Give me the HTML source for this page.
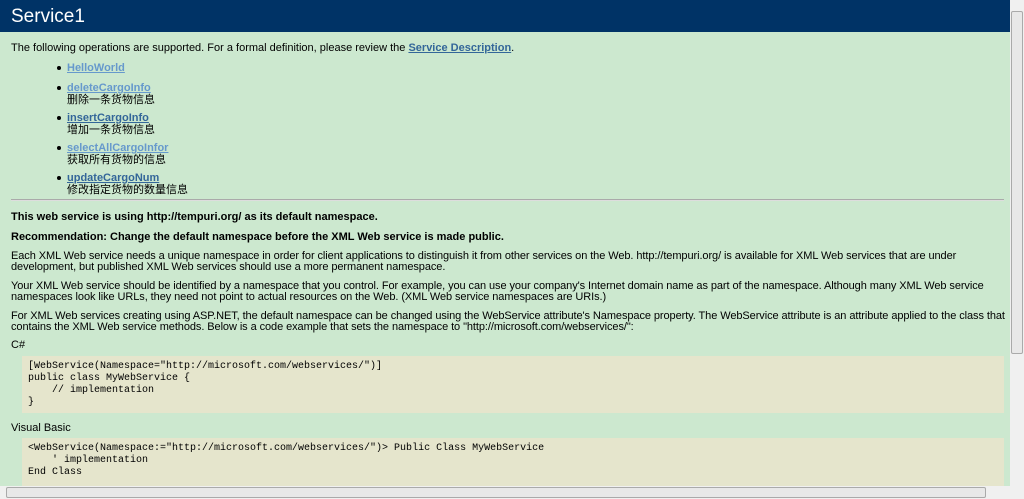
<!DOCTYPE html>
<html><head><meta charset="utf-8"><style>
body{margin:0;width:1024px;height:499px;overflow:hidden;background:#cce8cf;font-family:"Liberation Sans","Noto Sans CJK SC",sans-serif;font-size:11px;color:#000;position:relative}
.a{position:absolute;white-space:nowrap;line-height:12px}
.p{letter-spacing:-0.08px}
#hdr{position:absolute;left:0;top:0;width:1010px;height:32px;background:#003366;color:#fff;font-size:19px}
#hdr span{position:absolute;left:11px;top:6px}
a{color:#336699;font-weight:bold;text-decoration:underline}
a.v{color:#6699cc}
.b{font-weight:bold}
.dot{position:absolute;left:57px;width:4px;height:4px;background:#000;border-radius:50%}
.code{position:absolute;left:22px;width:982px;background:#e5e5cc;font-family:"Liberation Mono",monospace;font-size:10px;color:#000}
.code div{position:absolute;left:6px;white-space:pre;line-height:12px}
#vs{position:absolute;left:1010px;top:0;width:14px;height:486px;background:#f0f0f0}
#vt{position:absolute;left:1011px;top:11px;width:12px;height:343px;background:#e8e8e8;border:1px solid #aaa;border-radius:2px;box-sizing:border-box}
#hs{position:absolute;left:0;top:486px;width:1024px;height:13px;background:#f0f0f0}
#ht{position:absolute;left:6px;top:487px;width:980px;height:11px;background:#e8e8e8;border:1px solid #aaa;border-radius:2px;box-sizing:border-box}
hr{position:absolute;left:11px;top:199px;width:993px;margin:0;border:0;border-top:1px solid #aaa;border-bottom:1px solid #ddd}
</style></head><body>
<div id="hdr"><span>Service1</span></div>
<div class="a" style="left:11px;top:42px">The following operations are supported. For a formal definition, please review the <a href="#">Service Description</a>.</div>
<div class="dot" style="top:66px"></div><div class="a" style="left:67px;top:62px"><a class="v" href="#">HelloWorld</a></div>
<div class="dot" style="top:86px"></div><div class="a" style="left:67px;top:82px"><a class="v" href="#">deleteCargoInfo</a></div><div class="a" style="left:67px;top:94px">删除一条货物信息</div>
<div class="dot" style="top:116px"></div><div class="a" style="left:67px;top:112px"><a href="#">insertCargoInfo</a></div><div class="a" style="left:67px;top:124px">增加一条货物信息</div>
<div class="dot" style="top:146px"></div><div class="a" style="left:67px;top:142px"><a class="v" href="#">selectAllCargoInfor</a></div><div class="a" style="left:67px;top:154px">获取所有货物的信息</div>
<div class="dot" style="top:176px"></div><div class="a" style="left:67px;top:172px"><a href="#">updateCargoNum</a></div><div class="a" style="left:67px;top:184px">修改指定货物的数量信息</div>
<hr>
<div class="a b" style="left:11px;top:211px">This web service is using http://tempuri.org/ as its default namespace.</div>
<div class="a b" style="left:11px;top:231px">Recommendation: Change the default namespace before the XML Web service is made public.</div>
<div class="a p" style="left:11px;top:250px">Each XML Web service needs a unique namespace in order for client applications to distinguish it from other services on the Web. http://tempuri.org/ is available for XML Web services that are under</div>
<div class="a p" style="left:11px;top:261px">development, but published XML Web services should use a more permanent namespace.</div>
<div class="a p" style="left:11px;top:280px">Your XML Web service should be identified by a namespace that you control. For example, you can use your company's Internet domain name as part of the namespace. Although many XML Web service</div>
<div class="a p" style="left:11px;top:291px">namespaces look like URLs, they need not point to actual resources on the Web. (XML Web service namespaces are URIs.)</div>
<div class="a p" style="left:11px;top:310px">For XML Web services creating using ASP.NET, the default namespace can be changed using the WebService attribute's Namespace property. The WebService attribute is an attribute applied to the class that</div>
<div class="a p" style="left:11px;top:321px">contains the XML Web service methods. Below is a code example that sets the namespace to "http://microsoft.com/webservices/":</div>
<div class="a" style="left:11px;top:339px">C#</div>
<div class="code" style="top:356px;height:57px">
<div style="top:5px">[WebService(Namespace="http://microsoft.com/webservices/")]</div>
<div style="top:17px">public class MyWebService {</div>
<div style="top:29px">    // implementation</div>
<div style="top:41px">}</div>
</div>
<div class="a" style="left:11px;top:422px">Visual Basic</div>
<div class="code" style="top:438px;height:48px">
<div style="top:5px">&lt;WebService(Namespace:="http://microsoft.com/webservices/")&gt; Public Class MyWebService</div>
<div style="top:17px">    ' implementation</div>
<div style="top:29px">End Class</div>
</div>
<div id="vs"></div><div id="vt"></div>
<div id="hs"></div><div id="ht"></div>
</body></html>
